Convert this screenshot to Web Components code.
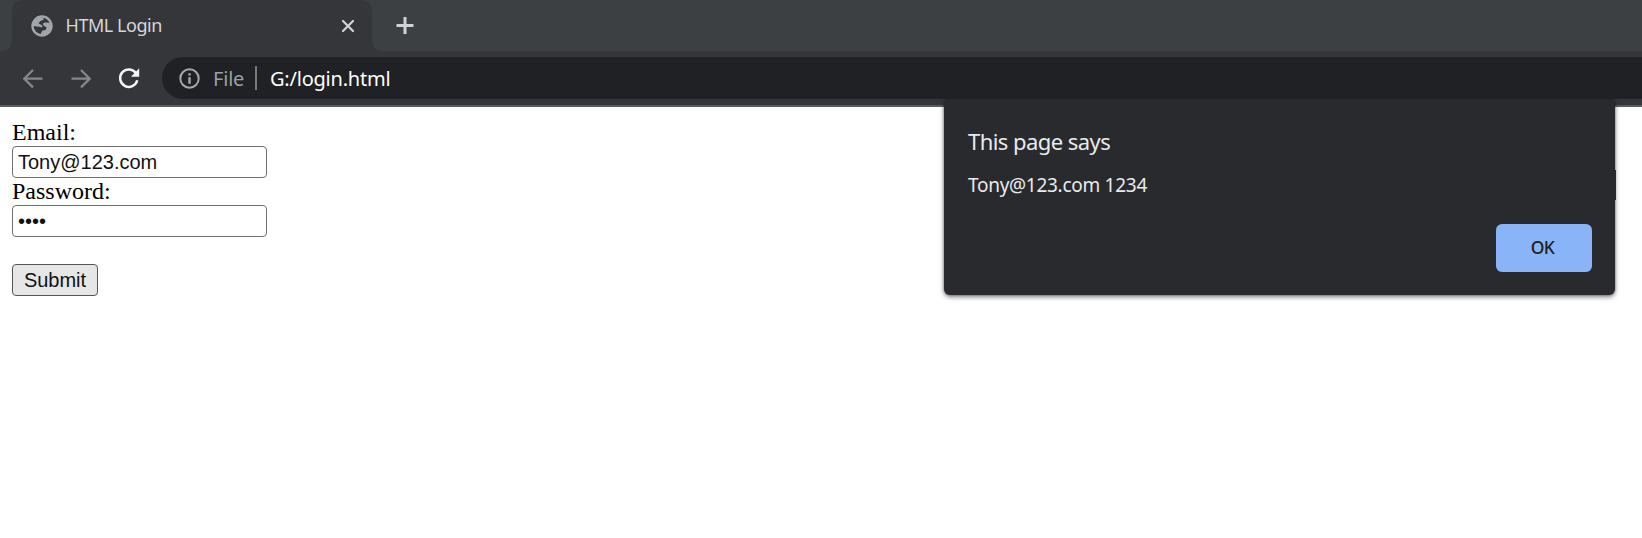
<!DOCTYPE html>
<html lang="en"><head><meta charset="utf-8"><title>HTML Login</title>
<style>body{margin:0;background:#fff;overflow:hidden}</style></head>
<body>
<browser-window>
  <tab-strip slot="tabs"><browser-tab>HTML Login</browser-tab></tab-strip>
  <tool-bar slot="toolbar"><span slot="scheme">File</span>G:/login.html</tool-bar>
  <login-form>
    <form-field label="Email:">Tony@123.com</form-field>
    <form-field label="Password:">••••</form-field>
    <submit-button>Submit</submit-button>
  </login-form>
  <alert-dialog slot="dialog"><span slot="title">This page says</span>Tony@123.com 1234</alert-dialog>
</browser-window>
<script>
const define = (name, html) => customElements.define(name, class extends HTMLElement {
  constructor() {
    super();
    const t = document.createElement('template');
    t.innerHTML = html;
    this.attachShadow({mode: 'open'}).append(t.content.cloneNode(true));
  }
  connectedCallback() {
    const label = this.shadowRoot.querySelector('[data-label]');
    if (label) label.textContent = this.getAttribute('label');
  }
});

define('browser-window', `<style>
:host{display:flex;flex-direction:column;width:1642px;height:538px;position:relative;overflow:hidden;background:#fff;font-family:"Noto Sans","Open Sans",sans-serif}
</style><slot name="tabs"></slot><slot name="toolbar"></slot><slot></slot><slot name="dialog"></slot>`);

define('tab-strip', `<style>
:host{display:flex;height:51px;flex:none;background:#3c4043}
.edge{width:12px;background:#35363a}
.edge i{display:block;height:51px;background:#3c4043}
.l i{border-bottom-right-radius:10px}
.r i{border-bottom-left-radius:10px}
svg{margin:15px 0 0 11px}
</style><div class="edge l"><i></i></div><slot></slot><div class="edge r"><i></i></div>
<svg width="20" height="20" viewBox="0 0 20 20"><path d="M10 2v17M1.5 10.5h17" stroke="#d0d2d4" stroke-width="3"/></svg>`);

define('browser-tab', `<style>
:host{display:flex;align-items:center;box-sizing:border-box;width:360px;padding:0 16px 0 19px;height:51px;background:#35363a;border-radius:10px 10px 0 0;color:#d4d6d9;font-size:18px}
.t{margin-left:12.5px;flex:1;letter-spacing:-.45px;line-height:24px;padding-bottom:2px;white-space:nowrap}
</style><svg width="22" height="22" viewBox="0 0 22 22"><circle cx="11" cy="11" r="9.5" fill="none" stroke="#a2a6ab" stroke-width="2.4"/><path fill="#a2a6ab" d="M2 11V7L7 2.5l5.5.3v2L9 6.3 7.7 8.6l3.6 1.8v2.2l-3-.9zM20 7.7l-6.2-.3-2.1 1.3 1.3 2.4 2.6 1.2-1 2.6-3.5.9-1.8 4.2 5.7-.6 5-6z"/></svg>
<span class="t"><slot></slot></span>
<svg width="16" height="16" viewBox="0 0 16 16"><path d="M3 3l10 10M13 3l-10 10" stroke="#d0d2d4" stroke-width="2.2" stroke-linecap="round"/></svg>`);

define('tool-bar', `<style>
:host{display:flex;box-sizing:border-box;height:56px;flex:none;padding-top:6px;background:#35363a;border-bottom:2px solid #5b5b60;font-size:20px}
.nav{display:flex;width:162px;box-sizing:border-box;padding:9px 0 0 21px;gap:24px}
.nav svg{width:24px;height:24px;flex:none}
.box{display:flex;align-items:center;flex:1;height:42px;background:#202124;border-radius:21px 0 0 21px;padding-left:16px;white-space:nowrap;line-height:28px}
.s,.u{padding-top:2px}
.s{color:#9aa0a6;margin-left:12px;width:31px;letter-spacing:-.2px}
.d{width:2px;height:24px;background:#77797d;margin:0 13px 0 11px}
.u{color:#fff;letter-spacing:-.22px}
</style><div class="nav">
<svg viewBox="0 0 24 24" fill="none" stroke="#85878b" stroke-width="2.3"><path d="M21.5 12.7H3.5M12 4L3.3 12.7 12 21.4"/></svg>
<svg viewBox="0 0 24 24" fill="none" stroke="#85878b" stroke-width="2.3"><path d="M2.5 12.7h18M12 4l8.7 8.7L12 21.4"/></svg>
<svg viewBox="0 0 24 24"><path d="M19.2 7.5A8.7 8.7 0 1 0 20.3 14.2" fill="none" stroke="#f1f3f4" stroke-width="2.5"/><path d="M22.2 2.2v8.5H13.9z" fill="#f1f3f4"/></svg>
</div><div class="box"><svg width="23" height="23" viewBox="0 0 23 23"><circle cx="11.5" cy="11.5" r="9.2" fill="none" stroke="#a5a9ae" stroke-width="2"/><path d="M10.3 6.3h2.4v2.2h-2.4zM10.3 10.2h2.4v6.6h-2.4z" fill="#a5a9ae"/></svg>
<span class="s"><slot name="scheme"></slot></span><i class="d"></i><span class="u"><slot></slot></span></div>`);

define('login-form', `<style>
:host{display:flex;flex-direction:column;align-items:flex-start;padding:12px}
</style><slot></slot>`);

define('form-field', `<style>
:host{display:block;height:59px}
label{display:block;font:24px/27px "Liberation Serif",serif;color:#000;height:27px}
.i{display:block;box-sizing:border-box;width:255px;height:32px;border:1px solid #707070;border-radius:4px;padding:0 5px;font:20px/30px "Liberation Sans",sans-serif;color:#111;background:#fff;white-space:nowrap}
</style><label data-label></label><span class="i"><slot></slot></span>`);

define('submit-button', `<style>
:host{display:block;margin-top:27px}
button{display:block;box-sizing:border-box;width:86px;height:32px;padding:0;border:1px solid #555;border-radius:4px;background:#e6e6e6;color:#111;font:20px/30px "Liberation Sans",sans-serif}
</style><button><slot></slot></button>`);

define('alert-dialog', `<style>
:host{display:flex;flex-direction:column;box-sizing:border-box;position:absolute;left:944px;top:99px;width:671px;height:196px;padding:26px 23px 23px 24px;background:#292a2d;border-radius:6px;box-shadow:0 2px 5px rgba(0,0,0,.5),0 0 2px rgba(0,0,0,.45);clip-path:inset(0 -10px -10px -10px);color:#e8eaed;white-space:nowrap}
.t{font-size:22px;line-height:32px;letter-spacing:-.55px}
.m{font-size:19px;line-height:28px;margin-top:14px;letter-spacing:-.28px}
button{align-self:flex-end;margin-top:auto;width:96px;height:48px;border:0;padding:0 3px 1px 0;border-radius:6px;background:#8ab4f8;color:#202124;font:500 17.5px/47px "Noto Sans",sans-serif;letter-spacing:-.6px}
.n{position:absolute;right:-1px;top:71px;width:2px;height:30px;background:#292a2d}
</style><div class="t"><slot name="title"></slot></div><div class="m"><slot></slot></div><button>OK</button><i class="n"></i>`);
</script>
</body></html>
